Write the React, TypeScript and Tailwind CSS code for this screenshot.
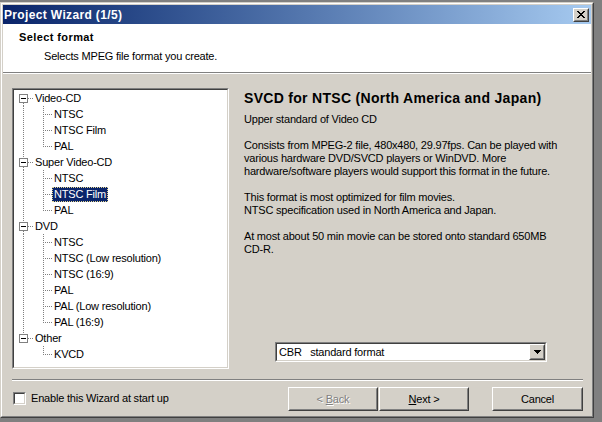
import React from 'react';

type Group = { label: string; children: string[] };

const TREE: Group[] = [
  { label: 'Video-CD', children: ['NTSC', 'NTSC Film', 'PAL'] },
  { label: 'Super Video-CD', children: ['NTSC', 'NTSC Film', 'PAL'] },
  {
    label: 'DVD',
    children: ['NTSC', 'NTSC (Low resolution)', 'NTSC (16:9)', 'PAL', 'PAL (Low resolution)', 'PAL (16:9)'],
  },
  { label: 'Other', children: ['KVCD'] },
];

const SELECTED = { group: 1, child: 1 };
const DOT = '#808080';

// dotted tree connectors, one small drawing per row
const ParentLines: React.FC<{ first: boolean; last: boolean }> = ({ first, last }) => (
  <svg width="19" height="16" shapeRendering="crispEdges" className="shrink-0">
    {!first && <line x1="9.5" y1="0" x2="9.5" y2="4" stroke={DOT} strokeDasharray="1 1" />}
    {!last && <line x1="9.5" y1="13" x2="9.5" y2="16" stroke={DOT} strokeDasharray="1 1" />}
    <line x1="14" y1="8.5" x2="19" y2="8.5" stroke={DOT} strokeDasharray="1 1" />
    <rect x="5.5" y="4.5" width="8" height="8" fill="#fff" stroke={DOT} />
    <line x1="7" y1="8.5" x2="12" y2="8.5" stroke="#000" />
  </svg>
);

const ChildLines: React.FC<{ groupLast: boolean; last: boolean }> = ({ groupLast, last }) => (
  <svg width="38" height="16" shapeRendering="crispEdges" className="shrink-0">
    {!groupLast && <line x1="9.5" y1="0" x2="9.5" y2="16" stroke={DOT} strokeDasharray="1 1" />}
    <line x1="29.5" y1="0" x2="29.5" y2={last ? 9 : 16} stroke={DOT} strokeDasharray="1 1" />
    <line x1="31" y1="8.5" x2="38" y2="8.5" stroke={DOT} strokeDasharray="1 1" />
  </svg>
);

const Raised: React.FC<{ className?: string; children?: React.ReactNode }> = ({ className = '', children }) => (
  <div className={`border border-t-white border-l-white border-r-[#404040] border-b-[#404040] bg-[#d4d0c8] ${className}`}>
    <div className="flex h-full w-full items-center justify-center border border-t-[#d4d0c8] border-l-[#d4d0c8] border-r-[#808080] border-b-[#808080]">
      {children}
    </div>
  </div>
);

const Sunken: React.FC<{ className?: string; children?: React.ReactNode }> = ({ className = '', children }) => (
  <div className={`border border-t-[#808080] border-l-[#808080] border-r-white border-b-white ${className}`}>
    <div className="h-full w-full border border-t-[#404040] border-l-[#404040] border-r-[#d4d0c8] border-b-[#d4d0c8] bg-white">
      {children}
    </div>
  </div>
);

export default function App() {
  return (
    <div
      className="h-[422px] w-[602px] overflow-hidden bg-[#808080] pt-[2px] text-[11px] tracking-[-0.2px] text-black"
      style={{ fontFamily: '"Liberation Sans", Arial, sans-serif' }}
    >
      <div className="h-[416px] w-[594px] border border-t-[#d4d0c8] border-l-[#d4d0c8] border-r-[#404040] border-b-[#404040]">
        <div className="h-full w-full border border-t-white border-l-white border-r-[#808080] border-b-[#808080]">
          <div className="flex h-full w-full flex-col bg-[#d4d0c8] p-px">
            {/* Title bar */}
            <div className="flex h-[19px] shrink-0 items-center bg-gradient-to-r from-[#0a246a] to-[#a6caf0] pl-[1px] pr-[2px]">
              <span className="text-[12px] font-bold leading-none tracking-[0.35px] text-white">Project Wizard (1/5)</span>
              <Raised className="ml-auto h-[14px] w-[16px]">
                <svg width="8" height="7" viewBox="0 0 8 7" shapeRendering="crispEdges">
                  <path d="M0 0h2v1h-2zM6 0h2v1h-2zM1 1h2v1h-2zM5 1h2v1h-2zM2 2h4v1h-4zM3 3h2v1h-2zM2 4h4v1h-4zM1 5h2v1h-2zM5 5h2v1h-2zM0 6h2v1h-2zM6 6h2v1h-2z" fill="#000" />
                </svg>
              </Raised>
            </div>

            {/* Header */}
            <div className="h-[48px] shrink-0 bg-white pl-[16px] pt-[6px]">
              <div className="text-[11px] font-bold leading-[14px] tracking-[0.4px]">Select format</div>
              <div className="mt-[5px] pl-[25px] leading-[14px]">Selects MPEG file format you create.</div>
            </div>
            <div className="h-px shrink-0 bg-[#808080]" />
            <div className="h-px shrink-0 bg-white" />

            {/* Body */}
            <div className="flex h-[305px] shrink-0 pl-[9px]">
              <Sunken className="mt-[14px] h-[281px] w-[217px] shrink-0">
                <div className="flex flex-col">
                  {TREE.map((g, gi) => {
                    const groupLast = gi === TREE.length - 1;
                    return (
                      <React.Fragment key={g.label}>
                        <div className="flex h-4 items-center">
                          <ParentLines first={gi === 0} last={groupLast} />
                          <span className="px-[2px] leading-[15px]">{g.label}</span>
                        </div>
                        {g.children.map((c, ci) => {
                          const sel = gi === SELECTED.group && ci === SELECTED.child;
                          return (
                            <div key={c + ci} className="flex h-4 items-center">
                              <ChildLines groupLast={groupLast} last={ci === g.children.length - 1} />
                              <span
                                className={
                                  sel
                                    ? 'border border-dotted border-[#e8d890] bg-[#0a246a] px-px leading-[13px] text-white'
                                    : 'px-[2px] leading-[15px]'
                                }
                              >
                                {c}
                              </span>
                            </div>
                          );
                        })}
                      </React.Fragment>
                    );
                  })}
                </div>
              </Sunken>

              <div className="ml-[15px] flex w-[339px] flex-col pt-[16px]">
                <div className="text-[14px] font-bold leading-[16px] tracking-[0.3px]">SVCD for NTSC (North America and Japan)</div>
                <div className="mt-[7px] leading-[13px]">
                  <p>Upper standard of Video CD</p>
                  <p className="mt-[13px]">
                    Consists from MPEG-2 file, 480x480, 29.97fps. Can be played with
                    <br />
                    various hardware DVD/SVCD players or WinDVD. More
                    <br />
                    hardware/software players would support this format in the future.
                  </p>
                  <p className="mt-[13px]">
                    This format is most optimized for film movies.
                    <br />
                    NTSC specification used in North America and Japan.
                  </p>
                  <p className="mt-[13px]">
                    At most about 50 min movie can be stored onto standard 650MB
                    <br />
                    CD-R.
                  </p>
                </div>

                <Sunken className="mb-[17px] ml-[31px] mt-auto h-[20px] w-[272px]">
                  <div className="flex h-full items-center">
                    <span className="whitespace-pre pl-[2px] leading-none">CBR   standard format</span>
                    <Raised className="ml-auto h-full w-[16px]">
                      <svg width="7" height="4" viewBox="0 0 7 4" shapeRendering="crispEdges">
                        <path d="M0 0h7v1h-7zM1 1h5v1h-5zM2 2h3v1h-3zM3 3h1v1h-1z" fill="#000" />
                      </svg>
                    </Raised>
                  </div>
                </Sunken>
              </div>
            </div>

            {/* Separator */}
            <div className="ml-[9px] mr-[8px] h-px shrink-0 bg-[#808080]" />
            <div className="ml-[9px] mr-[8px] h-px shrink-0 bg-white" />

            {/* Footer */}
            <div className="flex shrink-0 items-start pl-[10px] pr-[8px] pt-[6px]">
              <label className="mt-[5px] flex items-center">
                <Sunken className="h-[13px] w-[13px]" />
                <span className="ml-[5px] leading-[13px]">Enable this Wizard at start up</span>
              </label>
              <div className="ml-auto flex">
                <Raised className="h-[24px] w-[90px]">
                  <span className="text-[#808080] [text-shadow:1px_1px_0_#fff]">
                    &lt; <span className="underline">B</span>ack
                  </span>
                </Raised>
                <Raised className="ml-px h-[24px] w-[90px]">
                  <span>
                    <span className="underline">N</span>ext &gt;
                  </span>
                </Raised>
                <Raised className="ml-[23px] h-[24px] w-[91px]">
                  <span>Cancel</span>
                </Raised>
              </div>
            </div>
          </div>
        </div>
      </div>
    </div>
  );
}
